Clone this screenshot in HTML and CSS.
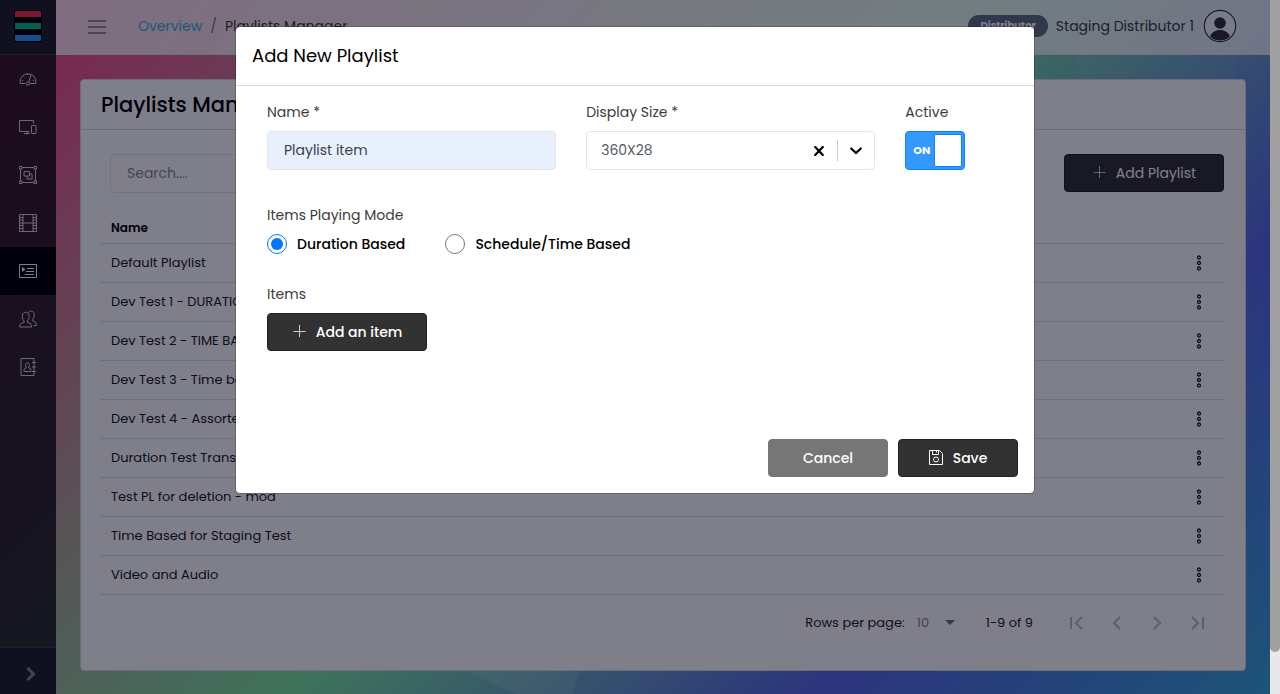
FILE: index.html
```html
<!DOCTYPE html>
<html lang="en">
<head>
<meta charset="utf-8">
<meta name="viewport" content="width=device-width, initial-scale=1">
<title>Playlists Manager</title>
<link rel="stylesheet" href="styles.css">
</head>
<body>
<svg class="sprite" aria-hidden="true">
  <symbol id="dots" viewBox="0 0 6 16"><g fill="none" stroke="currentColor" stroke-width="1.3"><circle cx="3" cy="2.5" r="1.5"/><circle cx="3" cy="8" r="1.5"/><circle cx="3" cy="13.5" r="1.5"/></g></symbol>
  <symbol id="plus" viewBox="0 0 14 14"><path d="M7.500 0v12M1.500 6.500h12" stroke="currentColor" fill="none"/></symbol>
</svg>
<div class="app">
  <svg class="backdrop-art" viewBox="0 0 1270 694" preserveAspectRatio="none" aria-hidden="true">
    <path d="M420 650L586 650L566 714L540 705Z" fill="#fff" opacity=".12"/>
    <circle cx="1156" cy="58" r="80" fill="#fff" opacity=".04"/>
  </svg>
  <nav class="sidebar" aria-label="Main">
    <a class="brand" href="#" aria-label="Home"><svg width="28" height="32" viewBox="0 0 28 32"><path d="M0 0h28v32H0z" fill="#000"/><path d="M1 1h26v6H1z" fill="#ff2b55"/><path d="M1 13h26v6H1z" fill="#00c08c"/><path d="M1 25h26v6H1z" fill="#2e9bff"/></svg></a>
    <div class="nav-list">
      <a class="nav-item" href="#" aria-label="Dashboard"><svg class="nav-icon" viewBox="0 0 18 18"><path d="M6 13.500H1.200a8 8 0 1 1 15.600 0H11M9.800 11.800L12 5M3 10.500h1M4.500 6.500l.8.600M8.500 4v1M14 10.500h1"/><circle cx="9" cy="13.500" r="1.700"/></svg></a>
      <a class="nav-item" href="#" aria-label="Devices"><svg class="nav-icon" viewBox="0 0 18 18"><path d="M10.500 13.500H.5v-11h14v3M8 13.500v3M5 15.500h6"/><rect x="12.500" y="7.500" width="4.500" height="8" rx=".6"/></svg></a>
      <a class="nav-item" href="#" aria-label="Layouts"><svg class="nav-icon" viewBox="0 0 18 18"><path d="M3 1.500h12M3 16.500h12M1.500 3v12M16.500 3v12M5 5.500h5.500V10H5zM10.500 8h2.500v5H8v-3"/><path d="M.5.500h2.500V3H.5zM15 .500h2.500V3H15zM.5 15H3v2.500H.5zM15 15h2.500v2.500H15z"/></svg></a>
      <a class="nav-item" href="#" aria-label="Media"><svg class="nav-icon" viewBox="0 0 18 18"><path d="M.5.500h17v17H.5zM4 1v16M14 1v16M4 9h10M1 3.500h3M1 6h3M1 9h3M1 11.500h3M1 14.500h3M14 3.500h3M14 6h3M14 9h3M14 11.500h3M14 14.500h3"/></svg></a>
      <a class="nav-item active" href="#" aria-label="Playlists" aria-current="page"><svg class="nav-icon" viewBox="0 0 18 18"><path d="M.5 2.500h17v13H.5zM8 6.500h7M7 9.500h8M6 12.500h9"/><path d="M3 5v5L6.500 7.500z" fill="currentColor" stroke="none"/></svg></a>
      <a class="nav-item" href="#" aria-label="Users"><svg class="nav-icon" viewBox="0 0 18 18"><path d="M5 11C3.500 9 3 7 3.500 5c.5-2 2-2.700 3.300-2.700s2.800.7 3.200 2.700c.5 2 0 4-1.500 6v1.500l3 1.200c.8.400 1 1 1 3.300H.7c0-2.300.3-2.900 1-3.300L5 12.500zM9.500 2.500C11 .6 14 .500 15 3.500c.6 2 .1 4-1.200 5.800V11l2.600 1.200c.8.500 1 1.300 1 3.300H14.500"/></svg></a>
      <a class="nav-item" href="#" aria-label="Contacts"><svg class="nav-icon" viewBox="0 0 18 18"><path d="M2 .500h13v17H2zM13 4.500h4M13 9h4M13 13.500h4M7.200 9C6 7 6.500 4.800 8.500 4.800S11 7 9.800 9v1l1.700.7c.5.300.5.800.5 2.800H5c0-2 0-2.500.5-2.800L7.200 10z"/></svg></a>
    </div>
    <button class="sidebar-toggle" type="button" aria-label="Expand sidebar"><svg width="10" height="16" viewBox="0 0 10 16"><path d="M1.500 2l6 6-6 6" fill="none" stroke="#84879a" stroke-width="3"/></svg></button>
  </nav>
  <div class="page">
    <header class="topbar">
      <button class="menu-btn" type="button" aria-label="Toggle menu"><svg width="18" height="14" viewBox="0 0 18 14"><path d="M0 1h18M0 7h18M0 13h18" stroke="#786f80" stroke-width="1.500"/></svg></button>
      <nav class="crumbs" aria-label="Breadcrumb"><a href="#">Overview</a><span class="slash">/</span><span>Playlists Manager</span></nav>
      <div class="account">
        <span class="badge">Distributor</span>
        <span class="user">Staging Distributor 1</span>
        <svg class="avatar" viewBox="0 0 36 36" aria-hidden="true"><circle cx="18" cy="18" r="17.500" fill="#fff" opacity=".55"/><circle cx="18" cy="18" r="15.700" fill="none" stroke="#33333c" stroke-width="1.200"/><circle cx="18" cy="15" r="5.800" fill="#33333c"/><path d="M8 28.500c2-5 6-6.500 10-6.500s8 1.500 10 6.500a14.300 14.300 0 0 1-20 0z" fill="#33333c"/></svg>
      </div>
    </header>
    <main class="content">
      <section class="card">
        <h1 class="card-title">Playlists Manager</h1>
        <div class="card-body">
          <div class="toolbar">
            <input class="field search" type="search" placeholder="Search...." aria-label="Search playlists">
            <button class="btn btn-wide" type="button"><svg class="plus"><use href="#plus"/></svg>Add Playlist</button>
          </div>
          <table class="playlists">
            <thead><tr><th scope="col">Name</th><th class="actions"></th></tr></thead>
            <tbody>
              <tr><td>Default Playlist</td><td class="actions"><button class="row-menu" type="button" aria-label="Row actions"><svg><use href="#dots"/></svg></button></td></tr>
              <tr><td>Dev Test 1 - DURATION</td><td class="actions"><button class="row-menu" type="button" aria-label="Row actions"><svg><use href="#dots"/></svg></button></td></tr>
              <tr><td>Dev Test 2 - TIME BASED</td><td class="actions"><button class="row-menu" type="button" aria-label="Row actions"><svg><use href="#dots"/></svg></button></td></tr>
              <tr><td>Dev Test 3 - Time based</td><td class="actions"><button class="row-menu" type="button" aria-label="Row actions"><svg><use href="#dots"/></svg></button></td></tr>
              <tr><td>Dev Test 4 - Assorted</td><td class="actions"><button class="row-menu" type="button" aria-label="Row actions"><svg><use href="#dots"/></svg></button></td></tr>
              <tr><td>Duration Test Transition</td><td class="actions"><button class="row-menu" type="button" aria-label="Row actions"><svg><use href="#dots"/></svg></button></td></tr>
              <tr><td>Test PL for deletion - mod</td><td class="actions"><button class="row-menu" type="button" aria-label="Row actions"><svg><use href="#dots"/></svg></button></td></tr>
              <tr><td>Time Based for Staging Test</td><td class="actions"><button class="row-menu" type="button" aria-label="Row actions"><svg><use href="#dots"/></svg></button></td></tr>
              <tr><td>Video and Audio</td><td class="actions"><button class="row-menu" type="button" aria-label="Row actions"><svg><use href="#dots"/></svg></button></td></tr>
            </tbody>
          </table>
          <div class="pager">
            <label for="rows">Rows per page:</label>
            <span class="rows-wrap"><select id="rows" class="rows"><option>10</option></select><svg width="10" height="5" viewBox="0 0 10 5"><path d="M0 0h10L5 5z" fill="#757575"/></svg></span>
            <span class="range">1-9 of 9</span>
            <div class="pager-btns">
              <button type="button" aria-label="First page" disabled><svg viewBox="0 0 16 14"><path d="M2 1v12M13 1L7 7l6 6"/></svg></button>
              <button type="button" aria-label="Previous page" disabled><svg viewBox="0 0 16 14"><path d="M11 1L5 7l6 6"/></svg></button>
              <button type="button" aria-label="Next page" disabled><svg viewBox="0 0 16 14"><path d="M5 1l6 6-6 6"/></svg></button>
              <button type="button" aria-label="Last page" disabled><svg viewBox="0 0 16 14"><path d="M3 1l6 6-6 6M14 1v12"/></svg></button>
            </div>
          </div>
        </div>
      </section>
    </main>
  </div>
  <div class="overlay">
    <form class="modal" role="dialog" aria-modal="true" aria-labelledby="modal-title">
      <h2 class="modal-title" id="modal-title">Add New Playlist</h2>
      <div class="modal-body">
        <div class="form-row">
          <div class="col"><label class="label" for="name">Name *</label><input class="field filled" id="name" type="text" value="Playlist item"></div>
          <div class="col"><label class="label" for="size">Display Size *</label>
            <div class="combo"><select id="size"><option>360X28</option></select>
              <button type="button" class="clear" aria-label="Clear display size"><svg width="10" height="10" viewBox="0 0 10 10"><path d="M1.200 1l7.600 8M8.800 1L1.200 9" stroke="#000" stroke-width="2.200" stroke-linecap="round"/></svg></button>
              <span class="divider"></span>
              <svg class="chevron" width="12" height="8" viewBox="0 0 12 8"><path d="M1.200 1.500L6 6l4.800-4.500" fill="none" stroke="#000" stroke-width="2.200" stroke-linecap="round"/></svg>
            </div></div>
          <div class="col"><label class="label" for="active">Active</label>
            <label class="switch"><input id="active" type="checkbox" checked><span class="on">ON</span><span class="knob"></span></label></div>
        </div>
        <fieldset class="modes">
          <legend class="label">Items Playing Mode</legend>
          <label class="radio"><input type="radio" name="mode" checked>Duration Based</label>
          <label class="radio"><input type="radio" name="mode">Schedule/Time Based</label>
        </fieldset>
        <div class="items">
          <span class="label">Items</span>
          <button class="btn btn-wide" type="button"><svg class="plus"><use href="#plus"/></svg>Add an item</button>
        </div>
      </div>
      <div class="modal-foot">
        <button class="btn btn-cancel" type="button">Cancel</button>
        <button class="btn" type="submit"><svg width="14" height="18" viewBox="0 0 14 18" fill="none" stroke="currentColor"><path d="M.5 1.500h10l3 3v11H.5zM3.500 1.500v4h6v-4M7.500 1.500v2"/><circle cx="7" cy="10.500" r="2.500"/></svg>Save</button>
      </div>
    </form>
  </div>
</div>
<div class="scrollbar" aria-hidden="true"><div class="thumb"></div></div>
</body>
</html>
```
FILE: styles.css
```css
*, *::before, *::after { box-sizing: border-box; }
body {
  margin: 0;
  min-height: 100vh;
  display: flex;
  font: 14px/21px Poppins, Inter, "Open Sans", sans-serif;
  color: #3c3c3c;
}
button, input, select { font: inherit; color: inherit; }
button { cursor: pointer; }
a { text-decoration: none; }
.sprite { position: absolute; width: 0; height: 0; }

.app {
  position: relative;
  flex: 1;
  min-width: 0;
  display: flex;
  overflow: hidden;
  background: linear-gradient(135deg, #ff4088 0%, #7ee8a0 50%, #5868e4 77%, #3aa8d8 100%);
}
.backdrop-art { position: absolute; inset: 0; width: 100%; height: 100%; }

.sidebar {
  position: relative;
  width: 56px;
  flex: none;
  display: flex;
  flex-direction: column;
  background: rgba(8, 8, 12, .78);
}
.brand {
  height: 55px;
  padding-bottom: 2px;
  display: flex;
  align-items: center;
  justify-content: center;
  background: #20202a;
  border-bottom: 1px solid #3a3a40;
}
.brand svg { display: block; }
.nav-list { flex: 1; }
.nav-item {
  height: 48px;
  display: flex;
  align-items: center;
  justify-content: center;
  color: #d8d4dc;
}
.nav-item.active { background: #000; color: #fff; }
.nav-icon { width: 18px; height: 18px; fill: none; stroke: currentColor; stroke-width: 1; }
.sidebar-toggle {
  height: 47px;
  padding: 5px 0 0 5px;
  display: flex;
  align-items: center;
  justify-content: center;
  background: #20202a;
  border: 0;
  border-top: 1px solid #3a3a40;
}

.page { position: relative; flex: 1; min-width: 0; display: flex; flex-direction: column; }
.topbar {
  height: 55px;
  padding: 0 32px;
  display: flex;
  align-items: center;
  background: rgba(255, 255, 255, .8);
  border-bottom: 1px solid #e4e2ea;
}
.menu-btn { width: 18px; margin-right: 32px; padding: 0; border: 0; background: none; display: flex; }
.crumbs { display: flex; gap: 8px; padding-bottom: 1px; }
.crumbs a { color: #39b2dc; }
.slash { color: #777080; }
.account { margin-left: auto; padding-bottom: 2px; display: flex; align-items: center; gap: 8px; }
.badge {
  height: 22px;
  padding: 0 12px;
  border-radius: 11px;
  background: #636f83;
  color: #fff;
  font-size: 10px;
  line-height: 21px;
  font-weight: 700;
}
.avatar { width: 36px; height: 36px; }

.content { flex: 1; padding: 24px 24px 23px; display: flex; }
.card {
  flex: 1;
  min-width: 0;
  background: #fff;
  border: 1px solid #d8d8de;
  border-radius: 4px;
}
.card-title {
  margin: 0;
  padding: 10px 20px 9px;
  border-bottom: 1px solid #d8d8e0;
  color: #000;
  font-size: 21px;
  line-height: 30px;
  font-weight: 500;
}
.card-body { padding: 24px 21px 0 19px; }
.toolbar { display: flex; justify-content: space-between; padding-left: 10px; }
.field {
  width: 100%;
  height: 39px;
  padding: 0 16px;
  border: 1px solid #e4e7ea;
  border-radius: 4px;
  background: #fff;
  color: #3c4248;
}
.search { width: 240px; background: none; }
.search::placeholder { color: #8a8a92; opacity: 1; }
.field.filled { background: #e8f0fe; }

.btn {
  width: 120px;
  height: 38px;
  padding: 0;
  display: flex;
  align-items: center;
  justify-content: center;
  gap: 10px;
  border: 1px solid #212121;
  border-radius: 4px;
  background: #323232;
  color: #fff;
  font-weight: 500;
}
.toolbar .btn { font-weight: 400; }
.btn-wide { width: 160px; }
.btn-cancel { background: #767676; border-color: #767676; }
.plus { width: 14px; height: 14px; color: #d0d0d0; }

.playlists { width: 100%; margin-top: 20px; border-collapse: collapse; color: #17171c; font-size: 13px; line-height: 18px; }
.playlists th, .playlists td { padding: 0 11px; text-align: left; border-bottom: 1px solid #dedee2; }
.playlists th { height: 30px; color: #000; font-size: 12px; font-weight: 600; }
.playlists td { height: 39px; }
.playlists .actions { width: 53px; padding: 0 10px 0 11px; }
.row-menu { width: 32px; height: 24px; padding: 0; border: 0; background: none; color: #202024; display: flex; align-items: center; justify-content: flex-end; padding-right: 12px; }
.row-menu svg { width: 6px; height: 16px; }

.pager { height: 56px; padding-right: 7px; display: flex; align-items: center; justify-content: flex-end; font-size: 13px; color: #222; }
.rows-wrap { position: relative; width: 38px; margin-left: 12px; display: flex; align-items: center; }
.rows { width: 100%; padding: 0; border: 0; background: none; appearance: none; color: #85858b; }
.rows-wrap svg { position: absolute; right: 0; pointer-events: none; }
.range { margin: 0 24px 0 31px; }
.pager-btns { display: flex; }
.pager-btns button { width: 40px; height: 40px; padding: 0; border: 0; background: none; display: flex; align-items: center; justify-content: center; }
.pager-btns svg { width: 16px; height: 14px; fill: none; stroke: #bdbdbd; stroke-width: 2; }

.overlay { position: absolute; inset: 0; padding: 26px 16px; background: rgba(0, 0, 21, .5); }
.modal {
  max-width: 800px;
  margin: 0 auto;
  background: #fff;
  background-clip: padding-box;
  border: 1px solid rgba(0, 0, 21, .2);
  border-radius: 5px;
}
.modal-title { margin: 0; padding: 16px; border-bottom: 1px solid #d8dbe0; color: #000; font-size: 18px; line-height: 26px; font-weight: 400; }
.modal-body { padding: 16px 16px 0; }
.form-row { display: grid; grid-template-columns: 5fr 5fr 2fr; }
.col { padding: 0 15px; }
.label { display: block; margin-bottom: 8px; padding: 0; line-height: 21px; }
.combo { height: 39px; display: flex; align-items: center; border: 1px solid #e4e7ea; border-radius: 4px; }
.combo select { flex: 1; min-width: 0; height: 37px; padding: 0 14px; border: 0; background: none; appearance: none; color: #55595d; }
.clear { width: 36px; padding: 0; border: 0; background: none; display: flex; justify-content: center; }
.divider { width: 1px; height: 21px; background: #ccc; }
.chevron { margin: 0 12px; }
.switch {
  position: relative;
  width: 60px;
  height: 39px;
  padding: 3px 2px 3px 7px;
  display: flex;
  align-items: center;
  justify-content: space-between;
  border: 1px solid #0a82ff;
  border-radius: 4px;
  background: #3399ff;
}
.switch input { position: absolute; inset: 0; width: 100%; height: 100%; margin: 0; opacity: 0; }
.on { color: #fff; font-size: 11px; font-weight: 700; }
.knob { width: 28px; height: 33px; background: #fff; border: 1px solid #0a82ff; border-radius: 2px; }

.modes { margin: 35px 0 0; padding: 0 15px; border: 0; display: flex; flex-wrap: wrap; gap: 40px; }
.modes .label { margin-bottom: 8px; }
.radio { display: flex; align-items: center; gap: 10px; color: #000; font-weight: 500; line-height: 20px; }
.radio input { width: 20px; height: 20px; margin: 0; accent-color: #0075ff; }
.items { margin-top: 30px; padding: 0 15px; }
.modal-foot { display: flex; justify-content: flex-end; gap: 10px; margin-top: 72px; padding: 16px; }

.scrollbar { width: 10px; flex: none; background: #e8e8e8; }
.thumb { height: 94vh; border-radius: 0 0 5px 5px; background: #a0a0a0; }
```
